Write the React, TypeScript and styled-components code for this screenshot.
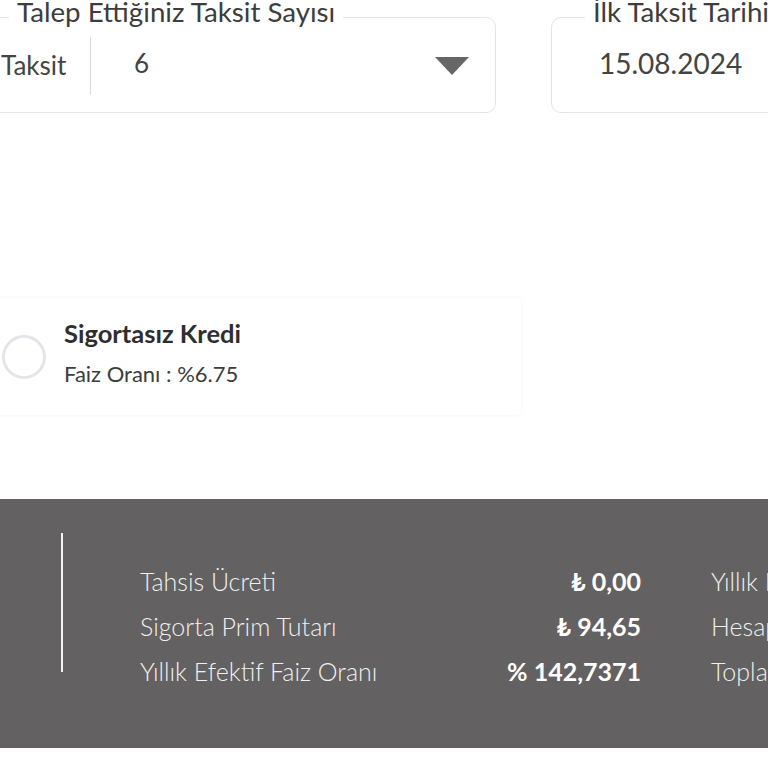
import styled, { createGlobalStyle } from "styled-components"

const GlobalStyle = createGlobalStyle`
  html, body {
    margin: 0;
    padding: 0;
    background: #ffffff;
    overflow: hidden;
  }
  body {
    font-family: Lato, "Open Sans", sans-serif;
    color: #3d3d3d;
  }
`

interface Row {
  label: string
  value: string
}

const leftRows: Row[] = [
  { label: "Tahsis Ücreti", value: "₺ 0,00" },
  { label: "Sigorta Prim Tutarı", value: "₺ 94,65" },
  { label: "Yıllık Efektif Faiz Oranı", value: "% 142,7371" },
]

const rightRows: Row[] = [
  { label: "Yıllık Maliyet Oranı", value: "% 147,2210" },
  { label: "Hesap İşletim Ücreti", value: "₺ 0,00" },
  { label: "Toplam Geri Ödeme", value: "₺ 1.294,65" },
]

const SummaryTable = ({ rows }: { rows: Row[] }) => (
  <Table>
    {rows.map((r) => (
      <Line key={r.label}>
        <Label>{r.label}</Label>
        <Value>{r.value}</Value>
      </Line>
    ))}
  </Table>
)

const App = () => {
  return (
    <Page>
      <GlobalStyle />
      <Stage>
        <Fields>
          <Field $width={516}>
            <Legend $left={28}>Talep Ettiğiniz Taksit Sayısı</Legend>
            <Prefix>Taksit</Prefix>
            <Divider />
            <SelectValue>6</SelectValue>
            <Caret viewBox="0 0 34 18">
              <path d="M0 0 H34 L17 18 Z" fill="#666" />
            </Caret>
          </Field>
          <Field $width={420}>
            <Legend $left={33}>İlk Taksit Tarihi</Legend>
            <DateValue>15.08.2024</DateValue>
          </Field>
        </Fields>

        <Card>
          <Radio />
          <CardText>
            <CardTitle>Sigortasız Kredi</CardTitle>
            <CardSub>Faiz Oranı : %6.75</CardSub>
          </CardText>
        </Card>
      </Stage>

      <Summary>
        <Rule />
        <SummaryTable rows={leftRows} />
        <SummaryTable rows={rightRows} />
      </Summary>
    </Page>
  )
}

export default App

const Page = styled.div`
  width: 768px;
  height: 768px;
  overflow: hidden;
`

const Stage = styled.div`
  margin-left: -20px;
  width: 1100px;
`

const Fields = styled.div`
  display: flex;
  gap: 55px;
  padding-top: 17px;
`

const Field = styled.div<{ $width: number }>`
  position: relative;
  box-sizing: border-box;
  flex-shrink: 0;
  width: ${(p) => p.$width}px;
  height: 96px;
  border: 1px solid #e4e4e4;
  border-radius: 10px;
  display: flex;
  align-items: center;
  padding: 0 26px 0 20px;
`

const Legend = styled.span<{ $left: number }>`
  position: absolute;
  top: -20px;
  left: ${(p) => p.$left}px;
  padding: 0 8px;
  background: #fff;
  font-size: 27.7px;
  line-height: 1;
  color: #3d3d3d;
  white-space: nowrap;
`

const Prefix = styled.span`
  font-size: 26px;
  color: #444;
  width: 66px;
`

const Divider = styled.span`
  width: 1px;
  height: 58px;
  background: #dcdcdc;
  margin: 2px 43px 0 23px;
`

const SelectValue = styled.span`
  flex: 1;
  font-size: 26px;
  color: #444;
  margin-top: -4px;
`

const Caret = styled.svg`
  width: 34px;
  height: 18px;
  margin-top: 2px;
`

const DateValue = styled.span`
  padding-left: 27px;
  font-size: 28px;
  color: #444;
  margin-top: -4px;
`

const Card = styled.div`
  box-sizing: border-box;
  margin: 185px 0 0 16px;
  width: 525px;
  height: 117px;
  background: #fff;
  border-radius: 4px;
  box-shadow: 0 0 4px rgba(0, 0, 0, 0.05);
  display: flex;
  align-items: center;
  padding-left: 6px;
  gap: 18px;
`

const Radio = styled.span`
  box-sizing: border-box;
  width: 44px;
  height: 44px;
  border-radius: 50%;
  border: 3px solid #e3e5e8;
  flex-shrink: 0;
`

const CardText = styled.div`
  display: flex;
  flex-direction: column;
  gap: 13px;
  margin-top: -8px;
`

const CardTitle = styled.span`
  font-size: 25.5px;
  line-height: 30px;
  font-weight: 700;
  color: #2e2e2e;
`

const CardSub = styled.span`
  font-size: 22px;
  line-height: 26px;
  color: #3d3d3d;
`

const Summary = styled.div`
  margin-top: 84px;
  width: 1400px;
  height: 249px;
  background: #636161;
  display: flex;
  align-items: flex-start;
  padding-left: 61px;
  box-sizing: border-box;
`

const Rule = styled.span`
  flex-shrink: 0;
  width: 2px;
  height: 139px;
  margin-top: 34px;
  background: #f2f2f2;
  margin-right: 77px;
`

const Table = styled.div`
  flex-shrink: 0;
  display: grid;
  grid-template-columns: 300px 201px;
  margin-top: 60px;
  margin-right: 70px;
`

const Line = styled.div`
  display: contents;
`

const Label = styled.span`
  font-size: 25px;
  font-weight: 300;
  line-height: 45px;
  color: #f0f0f0;
  white-space: nowrap;
`

const Value = styled.span`
  font-size: 25px;
  font-weight: 700;
  line-height: 45px;
  color: #fff;
  text-align: right;
  white-space: nowrap;
`
